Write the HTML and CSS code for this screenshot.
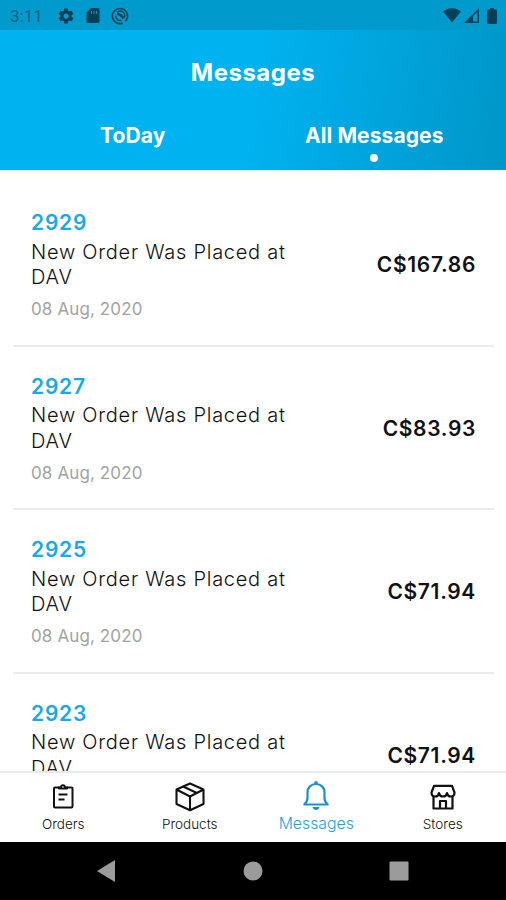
FILE: index.html
```html
<!DOCTYPE html>
<html lang="en">

<head>
    <meta charset="UTF-8" />
    <meta name="viewport" content="width=device-width, initial-scale=1.0" />
    <title>Messages</title>
    <link rel="stylesheet" href="styles.css">
</head>

<body>
    <div class="status-bar">
        <span class="clock">3:11</span>
        <svg class="status-gear" width="18" height="18" viewBox="0 0 24 24"><path fill="currentColor" fill-rule="evenodd" d="M19.4 13c.1-.3.1-.6.1-1s0-.7-.1-1l2.1-1.6c.2-.2.3-.4.1-.6l-2-3.500c-.1-.2-.4-.3-.6-.2l-2.500 1c-.5-.4-1.100-.7-1.700-1L14.500 2.400c0-.2-.2-.4-.5-.4h-4c-.3 0-.5.2-.5.4L9.200 5.100c-.6.200-1.200.6-1.700 1L5 5.100c-.2-.1-.5 0-.6.2l-2 3.500c-.1.200-.1.500.1.600L4.600 11c-.1.300-.1.700-.1 1s0 .7.1 1l-2.100 1.600c-.2.200-.2.400-.1.600l2 3.500c.1.200.4.300.6.200l2.500-1c.5.400 1.100.7 1.700 1l.3 2.700c0 .2.200.4.5.4h4c.3 0 .5-.2.500-.4l.3-2.700c.6-.2 1.200-.6 1.700-1l2.500 1c.2.100.5 0 .6-.2l2-3.500c.1-.2.1-.5-.1-.6zM12 15.500a3.500 3.500 0 1 1 0-7 3.500 3.500 0 0 1 0 7z"/></svg>
        <svg class="status-card" width="14" height="16" viewBox="0 0 14 16"><path fill="currentColor" fill-rule="evenodd" d="M5 0h7a1.500 1.500 0 0 1 1.500 1.500v12A1.500 1.500 0 0 1 12 15H2a1.500 1.500 0 0 1-1.500-1.500v-9zM5 3v3h1V3zm2.500 0v3h1V3zM10 3v3h1V3z"/></svg>
        <svg class="status-sync" width="18" height="18" viewBox="0 0 18 18" fill="none" stroke="currentColor"><path stroke-width="1.600" d="M11.500 16.200A7.600 7.600 0 1 1 16.300 11L14.500 14.500"/><path stroke-width="1.300" d="M10.500 13.300A4.500 4.500 0 0 1 4.700 8.500M6 5.500A4.500 4.500 0 0 1 13.300 10.500"/><path stroke-width="2.600" d="M6 6.800Q9.500 7 12.500 11.500"/></svg>
        <div class="status-right">
            <svg width="18" height="15" viewBox="0 0 18 15"><path fill="currentColor" d="M0 3.500C5-1 13-1 18 3.500L9 14.500z"/></svg>
            <svg width="16" height="15" viewBox="0 0 16 15"><path fill="currentColor" fill-rule="evenodd" d="M15 0v15H0zM13.500 3.700 9 8.200v5.300h4.500z"/></svg>
            <svg class="battery" width="10" height="16" viewBox="0 0 10 16"><path fill="currentColor" d="M3 0h4v1.500h2a1 1 0 0 1 1 1V15a1 1 0 0 1-1 1H1a1 1 0 0 1-1-1V2.500a1 1 0 0 1 1-1h2z"/></svg>
        </div>
    </div>

    <header class="header">
        <h1>Messages</h1>
        <div class="tabs">
            <div class="tab">ToDay</div>
            <div class="tab active">All Messages</div>
        </div>
    </header>

    <main class="message-list">
        <div class="message">
            <div class="message-body">
                <div class="order-no">2929</div>
                <div class="message-text">New Order Was Placed at DAV</div>
                <div class="message-date">08 Aug, 2020</div>
            </div>
            <div class="price">C$167.86</div>
        </div>
        <div class="message">
            <div class="message-body">
                <div class="order-no">2927</div>
                <div class="message-text">New Order Was Placed at DAV</div>
                <div class="message-date">08 Aug, 2020</div>
            </div>
            <div class="price">C$83.93</div>
        </div>
        <div class="message">
            <div class="message-body">
                <div class="order-no">2925</div>
                <div class="message-text">New Order Was Placed at DAV</div>
                <div class="message-date">08 Aug, 2020</div>
            </div>
            <div class="price">C$71.94</div>
        </div>
        <div class="message">
            <div class="message-body">
                <div class="order-no">2923</div>
                <div class="message-text">New Order Was Placed at DAV</div>
            </div>
            <div class="price">C$71.94</div>
        </div>
    </main>

    <nav class="bottom-nav">
        <div class="nav-item">
            <svg width="32" height="32" viewBox="0 0 32 32" fill="none" stroke="currentColor" stroke-width="2" stroke-linejoin="round"><path d="M12.500 6.500H8Q7 6.500 7 7.500V25.500Q7 26.500 8 26.500H24.500Q25.500 26.500 25.500 25.500V7.500Q25.500 6.500 24.500 6.500H19.500"/><path d="M12 7.500V6.500H14Q14.200 4.200 16 4.200T18 6.500H20V7.500z"/><path d="M11.500 13.500H20.500M11.500 18.500H17.500"/></svg>
            <span>Orders</span>
        </div>
        <div class="nav-item">
            <svg width="32" height="32" viewBox="0 0 32 32" fill="none" stroke="currentColor" stroke-width="2.100" stroke-linejoin="round"><path d="M16 2.500 29.500 8.500V23L16 29.300 2.500 23V8.500zM2.500 8.500 16 15.500 29.500 8.500M16 15.500V29.300"/><path d="M9.200 5.500 22.800 12"/></svg>
            <span>Products</span>
        </div>
        <div class="nav-item active">
            <svg width="32" height="32" viewBox="0 0 32 32" fill="none" stroke="currentColor" stroke-width="2.200" stroke-linejoin="round"><path d="M4.300 23.500Q7.500 20.500 7.500 17V11.500C7.500 6.500 11 3 16 3S24.500 6.500 24.500 11.500V17Q24.500 20.500 27.700 23.500z"/><circle cx="16" cy="1.800" r="1.800" fill="currentColor" stroke="none"/><path d="M12.500 26H19.500Q18.700 29 16 29T12.500 26z" fill="currentColor" stroke="none"/></svg>
            <span>Messages</span>
        </div>
        <div class="nav-item">
            <svg width="32" height="32" viewBox="0 0 32 32" fill="none" stroke="currentColor" stroke-width="2.200" stroke-linejoin="round"><path d="M7 4.800H25L27.500 11.500C27.500 14.500 25.500 15.500 23.800 15.500S20.300 14 20 12C19.700 14 18 15.500 16 15.500S12.300 14 12 12C11.700 14 10 15.500 8.200 15.500S4.500 14.500 4.500 11.500z"/><path d="M6.500 15V27.500H25.500V15"/><path d="M13 27V20H19V27"/></svg>
            <span>Stores</span>
        </div>
    </nav>

    <div class="system-bar">
        <svg class="back" width="18" height="22" viewBox="0 0 18 22"><path fill="currentColor" d="M18 0V22L0 11z"/></svg>
        <svg width="20" height="20" viewBox="0 0 20 20"><circle fill="currentColor" cx="10" cy="10" r="9.500"/></svg>
        <svg width="20" height="20" viewBox="0 0 20 20"><rect fill="currentColor" x=".5" y=".5" width="19" height="19" rx="1"/></svg>
    </div>
</body>

</html>
```
FILE: styles.css
```css
* {
    box-sizing: border-box;
}

body {
    font-family: Inter, "Liberation Sans", sans-serif;
    margin: 0;
    height: 900px;
    display: flex;
    flex-direction: column;
    overflow: hidden;
    background-color: #fff;
    color: #111;
}

svg {
    display: block;
    flex: none;
}

.status-bar {
    display: flex;
    align-items: center;
    height: 30px;
    flex: none;
    padding: 1px 9px 0 10px;
    background-color: #009acd;
    color: #034058;
}

.clock {
    width: 47px;
    font-family: Roboto, sans-serif;
    font-size: 17px;
    color: #07617f;
}

.status-card {
    margin-left: 11px;
}

.status-sync {
    margin-left: 11px;
}

.status-right {
    display: flex;
    margin-left: auto;
    gap: 3px;
}

.battery {
    margin-left: 4px;
}

.header {
    height: 139.5px;
    flex: none;
    background: linear-gradient(97deg, #00b2f0 50%, #0098cb 97%);
    color: #fff;
}

h1 {
    margin: 0;
    padding-top: 27px;
    font-size: 24px;
    line-height: 31px;
    font-weight: 700;
    letter-spacing: 0.5px;
    text-align: center;
}

.tabs {
    display: flex;
    padding: 35px 11px 0 12px;
}

.tab {
    flex: 1;
    display: flex;
    flex-direction: column;
    align-items: center;
    font-size: 21px;
    line-height: 26px;
    font-weight: 700;
    letter-spacing: 0.1px;
}

.tab.active::after {
    content: "";
    width: 8px;
    height: 8px;
    margin-top: 5px;
    border-radius: 50%;
    background-color: #fff;
}

.message-list {
    flex: 1;
    min-height: 0;
    overflow: hidden;
    padding: 13.5px 12px 0 13px;
}

.message {
    display: flex;
    justify-content: space-between;
    height: 163.6px;
    padding: 26px 18px 0;
    border-bottom: 2px solid #ebebeb;
}

.message-body {
    width: 270px;
}

.order-no {
    font-size: 21px;
    line-height: 28px;
    font-weight: 600;
    letter-spacing: 0.8px;
    color: #1ba9e5;
}

.message-text {
    margin-top: 2.5px;
    font-size: 20px;
    line-height: 25.5px;
    font-weight: 350;
    letter-spacing: 0.74px;
}

.message-date {
    margin-top: 7.5px;
    font-size: 17px;
    line-height: 22px;
    letter-spacing: 0.12px;
    color: #a3a3a3;
}

.price {
    padding-top: 43px;
    font-size: 21px;
    line-height: 26px;
    font-weight: 600;
    letter-spacing: 0.65px;
}

.bottom-nav {
    display: flex;
    height: 71px;
    flex: none;
    border-top: 2px solid #e9e9e9;
    background-color: #fff;
}

.nav-item {
    flex: 1;
    display: flex;
    flex-direction: column;
    align-items: center;
    padding-top: 8px;
    font-size: 13.5px;
    line-height: 18px;
    font-weight: 300;
    color: #111;
}

.nav-item span {
    margin-top: 2px;
}

.nav-item.active {
    color: #1b91cc;
}

.nav-item.active span {
    font-size: 15.8px;
    color: #1ba3e6;
}

.system-bar {
    display: flex;
    align-items: center;
    gap: 126px;
    height: 58px;
    flex: none;
    padding-left: 97px;
    background-color: #000;
    color: #9b9b9b;
}

.system-bar .back {
    margin-right: 2px;
}
```
